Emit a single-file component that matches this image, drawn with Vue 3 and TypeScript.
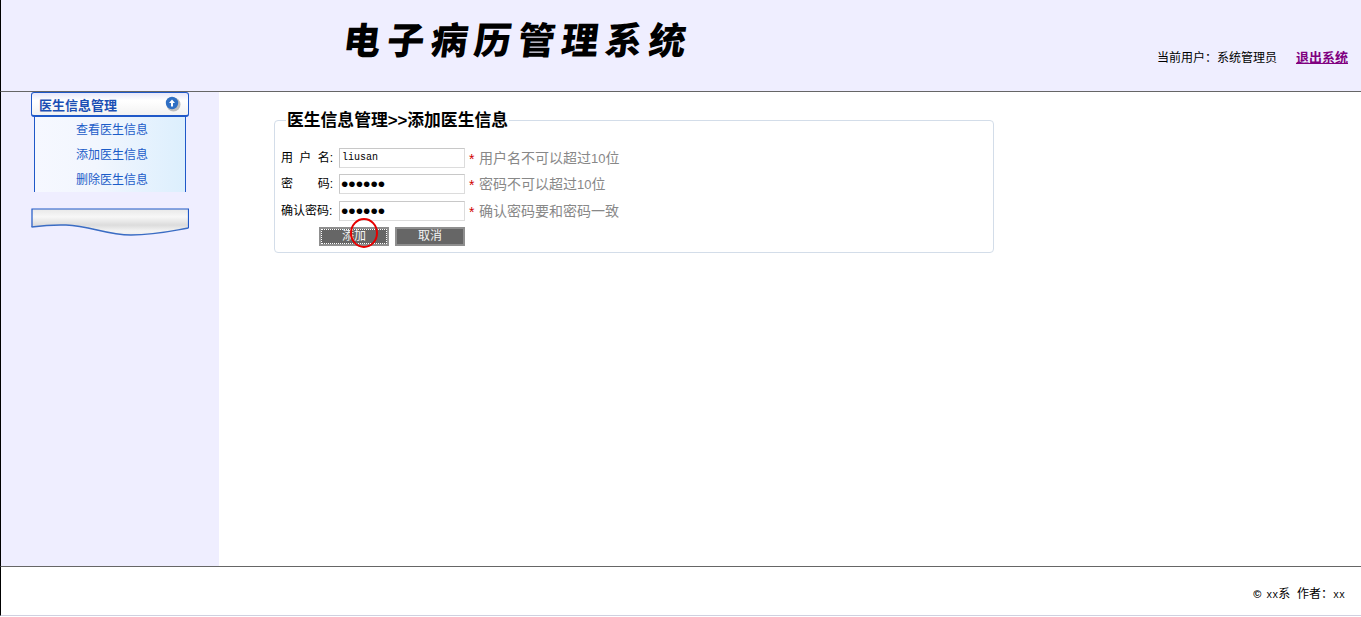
<script setup lang="ts">
import { ref } from "vue";

const menuItems = ["查看医生信息", "添加医生信息", "删除医生信息"];

const username = ref("liusan");
const password = ref("123456");
const confirm = ref("123456");
</script>

<template>
  <div class="page">
    <div class="top">
      <h1 class="title">电子病历管理系统</h1>
      <div class="user">
        <span>当前用户：系统管理员</span>
        <a class="logout" href="#">退出系统</a>
      </div>
    </div>

    <div class="middle">
      <div class="side">
        <div class="menu-head">
          <span>医生信息管理</span>
          <svg class="arrow" width="16" height="16" viewBox="0 0 16 16">
            <circle cx="8.5" cy="8.5" r="7" fill="#bdbdbd" />
            <circle cx="7" cy="7" r="6.2" fill="#2f6fc4" />
            <path d="M7 3.5 L10 7 H8 V10.5 H6 V7 H4 Z" fill="#fff" />
          </svg>
        </div>
        <ul class="menu-list">
          <li v-for="item in menuItems" :key="item">{{ item }}</li>
        </ul>
        <svg class="menu-closed" width="158" height="30" viewBox="0 0 158 30">
          <defs>
            <linearGradient id="silver" x1="0" y1="0" x2="0" y2="1">
              <stop offset="0" stop-color="#e8e8e8" />
              <stop offset="0.3" stop-color="#f7f7f7" />
              <stop offset="0.62" stop-color="#dcdcdc" />
              <stop offset="0.85" stop-color="#f4f4f4" />
              <stop offset="1" stop-color="#ececec" />
            </linearGradient>
          </defs>
          <path
            d="M0.5 1 H157.5 V20 C140 23 125 27 100 27 C75 27 60 18 35 17 C20 16.5 8 18 0.5 19 Z"
            fill="url(#silver)"
          />
          <path d="M1 19 V1 H157.5 V20" fill="none" stroke="#1f58c8" stroke-width="1.2" />
          <path
            d="M0.5 19 C8 18 20 16.5 35 17 C60 18 75 27 100 27 C125 27 140 23 157.5 20"
            fill="none"
            stroke="#3a6cc4"
            stroke-width="1.5"
          />
        </svg>
      </div>

      <div class="content">
        <fieldset class="box">
          <legend>医生信息管理&gt;&gt;添加医生信息</legend>
          <div class="row">
            <label class="spaced"><span>用</span><span>户</span><span>名:</span></label>
            <input v-model="username" class="field name" type="text" />
            <span class="star">*</span>
            <span class="hint">用户名不可以超过<span class="num">10</span>位</span>
          </div>
          <div class="row">
            <label class="spaced"><span>密</span><span>码:</span></label>
            <input v-model="password" class="field dots" type="password" />
            <span class="star">*</span>
            <span class="hint">密码不可以超过<span class="num">10</span>位</span>
          </div>
          <div class="row">
            <label class="spaced"><span>确认密码:</span></label>
            <input v-model="confirm" class="field dots" type="password" />
            <span class="star">*</span>
            <span class="hint">确认密码要和密码一致</span>
          </div>
          <div class="btns">
            <button class="btn focused" type="button">
              添加
              <i class="ring"></i>
            </button>
            <button class="btn" type="button">取消</button>
          </div>
        </fieldset>
      </div>
    </div>

    <div class="foot">
      <span class="copy">©</span>
      <span class="latin">xx</span>系&nbsp;&nbsp;作者：<span class="latin">xx</span>
    </div>
  </div>
</template>

<style>
html,
body {
  margin: 0;
  overflow: hidden;
}
</style>

<style scoped>
.page {
  width: 1361px;
  height: 617px;
  box-sizing: border-box;
  display: flex;
  flex-direction: column;
  font-family: "Liberation Sans", "Noto Sans CJK SC", sans-serif;
  font-size: 12px;
  color: #000;
  background: #fff;
}
.top {
  height: 92px;
  box-sizing: border-box;
  flex: none;
  display: flex;
  background: #efeeff;
  border-left: 1px solid #000;
  border-bottom: 1px solid #666;
  padding-left: 343px;
}
.title {
  margin: 13px 0 0;
  height: 50px;
  font-family: "Noto Sans CJK SC", sans-serif;
  font-size: 37px;
  font-weight: 900;
  line-height: 50px;
  letter-spacing: 6.6px;
  white-space: nowrap;
  transform: skewX(-7deg);
}
.user {
  margin-left: auto;
  margin-top: 49px;
  padding-right: 13px;
  display: flex;
  gap: 19px;
  line-height: 18px;
}
.logout {
  color: #800080;
  font-size: 13px;
  font-weight: bold;
}
.middle {
  height: 474px;
  flex: none;
  display: flex;
}
.side {
  width: 219px;
  box-sizing: border-box;
  flex: none;
  background: #efeeff;
  border-left: 1px solid #000;
  padding: 0 0 0 30px;
}
.menu-head {
  width: 158px;
  height: 25px;
  box-sizing: border-box;
  display: flex;
  align-items: center;
  justify-content: space-between;
  padding: 0 7px 0 7px;
  border: 1px solid #1f58c8;
  border-bottom-width: 2px;
  border-radius: 3px;
  background: linear-gradient(#e6e6fa, #fff 35%, #f2f2f2);
  color: #1b4fb4;
  font-size: 13px;
  font-weight: bold;
}
.arrow {
  margin-top: -1px;
}
.menu-list {
  width: 152px;
  height: 75px;
  box-sizing: border-box;
  margin: 0 0 0 3px;
  padding: 1px 0 0 41px;
  list-style: none;
  border-left: 1px solid #1f58c8;
  border-right: 1px solid #1f58c8;
  background: linear-gradient(90deg, #f6f8ff, #f2f6fe 40%, #dceffd);
  color: #1b5cc8;
}
.menu-list li {
  height: 25px;
  line-height: 25px;
}
.menu-closed {
  display: block;
  margin-top: 16px;
}
.content {
  flex: 1;
  padding: 19px 0 0 55px;
}
.box {
  width: 720px;
  height: 142px;
  box-sizing: border-box;
  margin: 0;
  padding: 17.6px 6px 0;
  border: 1px solid #d3dde9;
  border-radius: 4px;
  min-width: 0;
}
legend {
  margin-left: 5px;
  padding: 1px 1px 0;
  font-size: 16.8px;
  font-weight: bold;
  line-height: 18px;
}
.row {
  height: 26.5px;
  display: flex;
  align-items: flex-start;
}
.spaced {
  width: 52px;
  margin-right: 6px;
  display: flex;
  justify-content: space-between;
  line-height: 20px;
}
.field {
  width: 126px;
  height: 20px;
  box-sizing: border-box;
  margin: 0;
  padding: 0 2px;
  border: 1px solid #dcdcdc;
  border-top-color: #c8c8c8;
  border-left-color: #c8c8c8;
  background: #fff;
  font-family: "Liberation Mono", monospace;
  font-size: 10px;
  outline: none;
}
.dots {
  padding: 0 0 0 1px;
  font-family: "Liberation Sans", sans-serif;
  font-size: 21px;
}
.star {
  margin-left: 4px;
  width: 10px;
  color: #d00000;
  font-size: 14px;
  line-height: 22px;
}
.hint {
  color: #888;
  font-size: 14px;
  line-height: 20px;
}
.num {
  font-size: 13px;
}
.btns {
  display: flex;
  gap: 6px;
  padding-left: 38px;
}
.btn {
  position: relative;
  width: 70px;
  height: 19px;
  box-sizing: border-box;
  margin: 0;
  padding: 0;
  border: 2px solid #8f8f8f;
  background: #666;
  color: #f4f4f4;
  font-family: inherit;
  font-size: 12px;
  line-height: 15px;
}
.focused::before {
  content: "";
  position: absolute;
  inset: 0;
  border: 1px dotted #fff;
}
.ring {
  position: absolute;
  left: 29px;
  top: -11px;
  width: 28px;
  height: 30px;
  box-sizing: border-box;
  border: 2.5px solid #e60000;
  border-radius: 50%;
}
.foot {
  height: 50px;
  box-sizing: border-box;
  flex: none;
  padding: 20px 16px 0 0;
  border-left: 1px solid #000;
  border-top: 1px solid #666;
  border-bottom: 1px solid #d0d0e0;
  text-align: right;
  line-height: 14px;
  white-space: nowrap;
}
.latin {
  font-family: "Liberation Mono", monospace;
  font-size: 10px;
}
.copy {
  margin-right: 5px;
  font-size: 11px;
  font-weight: bold;
}
</style>
